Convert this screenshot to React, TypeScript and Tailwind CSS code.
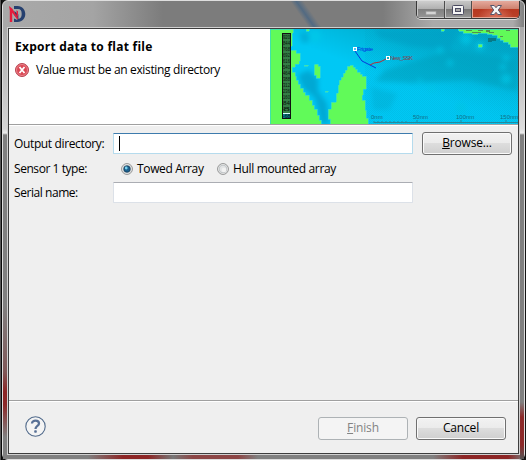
import type { ReactNode } from "react";

function AppLogo() {
  return (
    <svg width="17" height="17" viewBox="0 0 17 17" className="shrink-0">
      <path d="M5 0H8.5C13.5 0 16.3 4 16.3 8S13.5 16 8.5 16H5V12.5L8.3 14V12.9H9C11.6 12.9 12.7 11 12.7 8S11.6 3.1 9 3.1H5Z" fill="#26406f" />
      <path d="M5.4 5L9.4 8.5V14L5.4 9Z" fill="#26406f" />
      <path d="M0 0L3.4 2.8L9.3 12.5L8.3 13.4L3.2 6.8V16H.8V4.5Z" fill="#e51c3c" />
      <path d="M7.5 4.3L9 5.2V11L7.5 9.5Z" fill="#e51c3c" />
    </svg>
  );
}

function WindowButtons() {
  return (
    <div className="flex h-[18px] w-[104px] overflow-hidden rounded-b-[5px] border border-t-0 border-[#393939] shadow-[0_1px_0_#dcdcdc]">
      <div className="flex w-[28px] items-center justify-center border-r border-[#4d4d4d] bg-[linear-gradient(#cecece,#b1b1b1_45%,#818181_50%,#969696)] shadow-[inset_1px_-1px_0_#c7c7c7]">
        <svg width="12" height="18" viewBox="0 0 12 18"><rect x="1" y="10.5" width="10" height="3" fill="#d4d4d4" stroke="#a2a2a2" strokeWidth=".6" /></svg>
      </div>
      <div className="flex w-[27px] items-center justify-center border-r border-[#4d4d4d] bg-[linear-gradient(#c6c6c6,#aaaaaa_45%,#777777_50%,#999999)] shadow-[inset_1px_-1px_0_#c7c7c7]">
        <svg width="12" height="18" viewBox="0 0 12 18"><rect x=".5" y="4.5" width="11" height="9" rx="1" fill="#f6f6f6" stroke="#4b4b61" /><rect x="3.5" y="7.5" width="5" height="3" fill="#aaa" stroke="#4b4b61" /></svg>
      </div>
      <div className="flex flex-1 items-center justify-center bg-[radial-gradient(ellipse_at_50%_100%,#dc7460_0%,transparent_55%),linear-gradient(#e5aa9d,#ce8370_45%,#b73820_50%,#b94128)] shadow-[inset_1px_-1px_0_#e5a593]">
        <svg width="14" height="18" viewBox="0 0 14 18"><path d="M1.5 4.5H5.2L7 6.7L8.8 4.5H12.5L9.3 9L12.5 13.5H8.8L7 11.3L5.2 13.5H1.5L4.7 9Z" fill="#f5f5f5" stroke="#55556a" strokeWidth="1" /></svg>
      </div>
    </div>
  );
}

const depths = ["920", "844", "768", "692", "616", "540", "464", "388", "312", "236", "160", "84", "8"];
const shallows = [[315, 36, 6], [284, 34, 5], [440, 50, 3], [450, 63, 3], [480, 46, 5], [506, 58, 3], [503, 67, 3], [506, 79, 5], [466, 39, 6], [432, 89, 3], [475, 94, 4], [420, 80, 2], [461, 108, 5]];

function ChartBanner() {
  return (
    <svg width="248" height="95" viewBox="270 29 248 95" className="shrink-0" fontFamily="Liberation Sans, sans-serif">
      <defs>
        <linearGradient id="sea" x1="0" y1="1" x2="1" y2="0">
          <stop offset="0" stopColor="#00c8f8" />
          <stop offset=".48" stopColor="#00c8f4" />
          <stop offset=".68" stopColor="#00b4d8" />
          <stop offset="1" stopColor="#009fbf" />
        </linearGradient>
        <linearGradient id="south" x1="0" y1="0" x2="0" y2="1"><stop offset=".45" stopColor="#00c8f4" stopOpacity="0" /><stop offset="1" stopColor="#00c8f4" stopOpacity=".8" /></linearGradient>
        <filter id="soft" x="-50%" y="-50%" width="200%" height="200%"><feGaussianBlur stdDeviation="2.5" /></filter>
        <pattern id="dither" width="2" height="2" patternUnits="userSpaceOnUse"><path d="M0 0h1v1H0zM1 1h1v1H1z" fill="#008cae" fillOpacity=".14" /></pattern>
      </defs>
      <rect x="270" y="29" width="248" height="95" fill="url(#sea)" />
      <rect x="270" y="29" width="248" height="95" fill="url(#south)" />
      <g filter="url(#soft)">
        <path d="M298 75L309 70L318 79L318 91L327 103L329 124H321L315 98L303 88Z" fill="#009ec8" fillOpacity=".75" />
        <path d="M299 34l8-2 3 8-7 4z" fill="#009cc6" fillOpacity=".55" />
        <path d="M374 29H457L450 50L410 46L380 38Z" fill="#00a2c7" fillOpacity=".7" />
        <path d="M385 70L450 50L518 60V91L469 80L410 83L375 81Z" fill="#00a2c0" fillOpacity=".6" />
        <path d="M371 87L397 94L389 110H373Z" fill="#00add3" fillOpacity=".5" />
        {shallows.map(([x, y, r]) => <circle key={`${x}-${y}`} cx={x} cy={y} r={r} fill="#00c8e8" fillOpacity=".8" />)}
      </g>
      <rect x="365" y="29" width="153" height="95" fill="url(#dither)" />
      <g fill="#61fa59" stroke="#30d8d0" strokeWidth=".7" shapeRendering="crispEdges">
        <path d="M270 29H293V33H292V46H290V50H296V53H300V61H299V64H295V67H292V72H295V76H296V80H298V84H300V88H303V92H305V95H309V100H312V105H314V109H317V115H319V120H321V124H270Z" />
        <path d="M315 64H318V66H320V78H316V75H314V67Z" />
        <path d="M350 65H353V67H355V69H357V72H360V74H362V76H366V89H363V95H362V100H365V110H366V118H368V124H330V119H328V109H331V102H336V93H338V85H339V80H341V77H343V73H345V70H347V66H350Z" />
        <path d="M306 29h3v2h-3zM304 65h4v1h-4zM325 91h3v1h-3z" />
        <path d="M458 29H518V47H510V44H508V42H503V40H500V38H497V35H492V34H487V33H478V34H472V33H463V31H459Z" />
        <path d="M478 44h4v3h-4zM441 29h3v2h-3z" />
      </g>
      <path d="M466 30h6v1h-6zm6 2h9v1h-9zm14-2h4v2h-4zm20 0h4v1h-4zM478 30h5v1h-5zM489 32h5v1h-5zM500 36h3v1h-3z" fill="#548e50" />
      <path d="M488 38h8v3h-4v1h-4z" fill="#087987" />

      <rect x="282.5" y="33.5" width="8" height="85" fill="#347c45" stroke="#111" />
      <rect x="283" y="113" width="7" height="5" fill="#087890" />
      <rect x="283" y="113" width="7" height="1" fill="#d7ffff" />
      <g fontSize="5.2" fill="#071b0b">
        {depths.map((depth, i) => <text key={depth} x="283" y={38.5 + i * 6.05} textLength="7" lengthAdjust="spacingAndGlyphs">{depth}</text>)}
        <text x="283" y="118">-68</text>
      </g>

      <path d="M355 51L362 61L370 65L376 68" fill="none" stroke="#0638dc" />
      <path d="M370 65L374 63L380 62L388 58" fill="none" stroke="#b03038" />
      <rect x="353.5" y="47.5" width="3" height="3" fill="#4bc7f2" stroke="white" />
      <rect x="386.5" y="56.5" width="3" height="3" fill="#16afc5" stroke="white" />
      <text x="357" y="50.5" fontSize="6" fill="#0636e3" textLength="16">Frigate</text>
      <text x="390" y="59.5" fontSize="6" fill="#8b3c4c" textLength="23">New_SSK</text>
      <g fontSize="6" fill="#146f86">
        <text x="371" y="118.5">0nm</text>
        <text x="413" y="118.5">50nm</text>
        <text x="456" y="118.5">100nm</text>
        <text x="500" y="118.5">150nm</text>
      </g>
      <path d="M374 122.5H518M374 121v2M417 120v3M461 120v3M506 120v3M378 122v-1m4 1v-1m4 1v-1m4 1v-1m4 1v-1m4 1v-1m4 1v-1m4 1v-1" stroke="#24899d" fill="none" />
    </svg>
  );
}

function Button({ children, disabled = false }: { children: ReactNode; disabled?: boolean }) {
  return (
    <button
      disabled={disabled}
      className={disabled
        ? "h-[23px] w-[90px] rounded-[3px] border border-[#adb2b5] bg-[#f4f4f4] pb-px tracking-[-0.15px] text-[#838383]"
        : "h-[23px] w-[90px] rounded-[3px] border border-[#707070] bg-[linear-gradient(#f2f2f2,#ebebeb_48%,#dddddd_50%,#cfcfcf)] pb-px tracking-[-0.15px] shadow-[inset_0_0_0_1px_#fafafa]"}
    >
      {children}
    </button>
  );
}

function Radio({ checked = false }: { checked?: boolean }) {
  return (
    <svg width="12" height="12" viewBox="0 0 12 12" className="shrink-0">
      <circle cx="6" cy="6" r="5.4" fill="#f8f8f8" stroke="#8e8f8f" />
      <circle cx="6" cy="6" r="3.9" fill="#e2e4e5" stroke="#b5babd" strokeWidth=".8" />
      {checked && <><circle cx="6" cy="6" r="3.2" fill="#1a6190" stroke="#173d5a" strokeWidth=".8" /><circle cx="5.2" cy="5" r="1.4" fill="#78d2ef" /></>}
      {!checked && <circle cx="7" cy="7" r="2.3" fill="#f2f2f2" />}
    </svg>
  );
}

export default function App() {
  return (
    <div className="h-[460px] w-[526px] overflow-hidden bg-[linear-gradient(90deg,#555_0_1px,#080808_1px_2px,#151515_2px)] pl-[2px] font-['Open_Sans','Noto_Sans',sans-serif] text-[12px] leading-4 text-black">
      <div className="flex h-[460px] w-[523px] flex-col rounded-[6px] border border-[#dedede] [background-image:linear-gradient(90deg,#808080_85px,#8c2525_120px_145px,#777_170px,#8c4545_190px_235px,#808080_255px_430px,#8c2525_460px_505px,#777),linear-gradient(90deg,#a9a9a9_0,#a4a4a4_90px,#7c7c7c_160px,#7c7c7c_380px,#aaa_430px,#aaa_510px,#777_523px)] [background-position:0_100%,0_0] bg-no-repeat [background-size:100%_8px,100%_100%]">
        <div className="flex h-[26px] shrink-0 items-start justify-between bg-no-repeat pl-[6px] [background-image:linear-gradient(55deg,transparent_0_250px,#526a82_255px,transparent_261px)]">
          <div className="pt-[5px]"><AppLogo /></div>
          <div className="pr-[4px]"><WindowButtons /></div>
        </div>
        <div className="flex h-[432px]">
          <div className="h-full w-1 shrink-0 bg-[linear-gradient(#aaa,#d5d5d5_102px,#eee_106px,#808080_108px_278px,#805858_345px,#8c2525_365px,#8c2929_378px,#808080_410px)]" />
          <div className="h-[428px] w-[513px] shrink-0 border border-[#d0d0d0]">
            <main className="flex h-[426px] w-[511px] flex-col border border-[#3d3d3d] bg-[#efefef]">
              <header className="flex h-[95px] shrink-0 justify-between bg-white">
                <div className="w-[261px] pl-[6px] pt-[10px]">
                  <h1 className="whitespace-nowrap font-bold tracking-[0.25px]">Export data to flat file</h1>
                  <div className="mt-[7px] flex items-center gap-[7px] whitespace-nowrap tracking-[-0.35px]">
                    <svg width="14" height="14" viewBox="0 0 14 14">
                      <circle cx="7" cy="7" r="6.5" fill="#d94955" stroke="#b64652" /><circle cx="7" cy="7" r="5.5" fill="none" stroke="#f39ca2" strokeWidth=".7" /><path d="M4.5 4L9.5 10M9.5 4L4.5 10" stroke="white" strokeWidth="1.8" />
                    </svg>
                    <span>Value must be an existing directory</span>
                  </div>
                </div>
                <ChartBanner />
              </header>
              <div className="h-[2px] shrink-0 border-b border-t border-b-white border-t-[#a0a0a0]" />
              <section className="flex-1 pl-[5px] pt-[6px]">
                <div className="flex h-[23px] items-center">
                  <label className="w-[99px] whitespace-nowrap tracking-[-0.36px]">Output directory:</label>
                  <div className="h-[21px] w-[300px] rounded-[1px] border border-[#b5dbed] border-t-[#3d7bad] bg-white pl-[5px] pt-[2px]"><div className="h-[15px] w-px bg-black" /></div>
                  <div className="ml-[9px]"><Button><u>B</u>rowse...</Button></div>
                </div>
                <div className="mt-[6px] flex h-4 items-center">
                  <label className="w-[107px] tracking-[-0.44px]">Sensor 1 type:</label>
                  <label className="flex w-[96px] items-center gap-[4px] whitespace-nowrap tracking-[-0.35px]"><Radio checked />Towed Array</label>
                  <label className="flex items-center gap-[4px] whitespace-nowrap tracking-[-0.34px]"><Radio />Hull mounted array</label>
                </div>
                <div className="mt-[4px] flex h-[23px] items-center">
                  <label className="w-[99px] tracking-[-0.44px]">Serial name:</label>
                  <div className="h-[21px] w-[300px] rounded-[1px] border border-[#dce1e8] border-t-[#abadb3] bg-white" />
                </div>
              </section>
              <footer className="h-[53px] shrink-0 border-t border-[#a0a0a0]">
                <div className="flex h-[52px] items-center justify-between border-t border-white pl-[16px] pr-[12px]">
                  <svg width="21" height="21" viewBox="0 0 21 21" className="mb-[2px]">
                    <circle cx="10.5" cy="10.5" r="9.7" fill="#f4f4f4" stroke="#526b8c" strokeWidth="1.1" />
                    <path d="M7 7.5C7 3.6 14 3.8 14 7.4C14 10 10.5 9.8 10.5 13" fill="none" stroke="#587095" strokeWidth="2.3" /><rect x="9.2" y="14.3" width="2.6" height="2.4" rx=".8" fill="#587095" />
                  </svg>
                  <div className="flex gap-[8px] pt-[1px]"><Button disabled><u>F</u>inish</Button><Button>Cancel</Button></div>
                </div>
              </footer>
            </main>
          </div>
          <div className="h-full w-1 shrink-0 bg-[linear-gradient(#aaa,#ddd_102px,#eee_106px,#808080_108px_375px,#8c2929_390px,#8c2929_418px,#555)]" />
        </div>
      </div>
    </div>
  );
}
